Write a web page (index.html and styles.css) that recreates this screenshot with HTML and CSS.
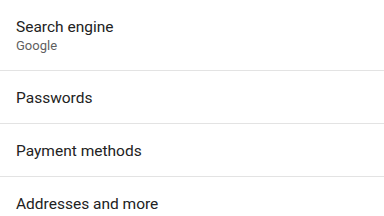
FILE: index.html
```html
<!DOCTYPE html>
<html lang="en">
<head>
<meta charset="UTF-8" />
<meta name="viewport" content="width=device-width, initial-scale=1" />
<title>Settings</title>
<link rel="stylesheet" href="styles.css">
</head>
<body>
  <ul class="settings">
    <li class="item item-two">
      <div class="title">Search engine</div>
      <div class="summary">Google</div>
    </li>
    <li class="item">
      <div class="title">Passwords</div>
    </li>
    <li class="item">
      <div class="title">Payment methods</div>
    </li>
    <li class="item">
      <div class="title">Addresses and more</div>
    </li>
  </ul>
</body>
</html>
```

FILE: styles.css
```css
* {
  box-sizing: border-box;
}

html, body {
  margin: 0;
  background: #ffffff;
  font-family: Roboto, 'Noto Sans', sans-serif;
  color: #222222;
}

.settings {
  list-style: none;
  margin: 0;
  padding: 0;
}

.item {
  display: flex;
  flex-direction: column;
  justify-content: center;
  height: 53px;
  padding: 2px 16px 0;
  border-bottom: 1px solid #e3e3e3;
}

.item-two {
  height: 71px;
  justify-content: flex-start;
  padding-top: 17px;
}

.title {
  font-size: 15.5px;
  line-height: 20px;
}

.summary {
  margin-top: 1px;
  font-size: 13px;
  line-height: 16px;
  color: #5f5f5f;
}
```
